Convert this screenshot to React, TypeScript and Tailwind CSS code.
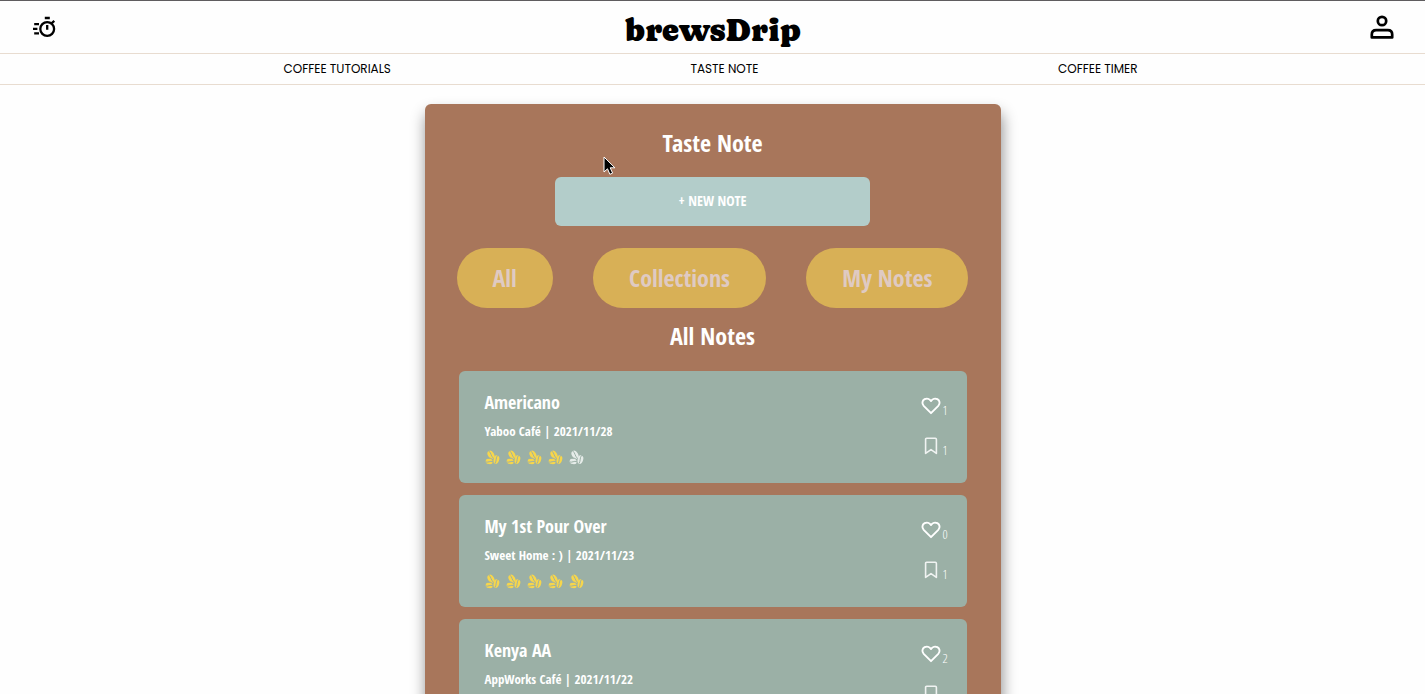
import type { ReactNode } from 'react';

type Note = { title: string; place: string; date: string; rating: number; likes: number; saves: number };

const notes: Note[] = [
  { title: 'Americano', place: 'Yaboo Café', date: '2021/11/28', rating: 4, likes: 1, saves: 1 },
  { title: 'My 1st Pour Over', place: 'Sweet Home : )', date: '2021/11/23', rating: 5, likes: 0, saves: 1 },
  { title: 'Kenya AA', place: 'AppWorks Café', date: '2021/11/22', rating: 4, likes: 2, saves: 1 },
];

const links = ['COFFEE TUTORIALS', 'TASTE NOTE', 'COFFEE TIMER'];
const filters = ['All', 'Collections', 'My Notes'];

function TimerIcon() {
  return (
    <svg width="24" height="24" viewBox="0 0 24 24" fill="none" stroke="#000" strokeWidth="2.3" aria-hidden="true">
      <circle cx="15.2" cy="14" r="6.9" />
      <path d="M12.8 3h5M19.500 8.400l2.800-2.500M15.200 10v4.700M2.200 9.200h4.800M1 13.800h4.400M2.200 18.400h4.800" />
    </svg>
  );
}

function UserIcon() {
  return (
    <svg width="24" height="24" viewBox="0 0 24 24" fill="none" stroke="#000" strokeWidth="2.7" aria-hidden="true">
      <circle cx="12" cy="6" r="4.2" />
      <path d="M1.8 22.4v-3c0-2.700 1.600-4.300 4.400-4.300h11.600c2.800 0 4.400 1.600 4.400 4.300v3z" strokeLinejoin="round" />
    </svg>
  );
}

function HeartIcon() {
  return (
    <svg width="20" height="18" viewBox="0 0 20 18" fill="none" stroke="#fff" strokeWidth="1.9" strokeLinejoin="round" aria-hidden="true">
      <path d="M10 16.2 2.7 8.9C.6 6.7 1.2 3.5 3.6 2.2 5.8 1 8.6 1.7 10 4.1 11.4 1.7 14.2 1 16.4 2.2c2.4 1.3 3 4.5.9 6.7z" />
    </svg>
  );
}

function BookmarkIcon() {
  return (
    <svg width="20" height="18" viewBox="0 0 20 18" fill="none" stroke="#fff" strokeOpacity="0.85" strokeWidth="1.6" strokeLinejoin="round" aria-hidden="true">
      <path d="M4.6 2.4c0-.7.4-1.1 1.1-1.1h8.6c.7 0 1.1.4 1.1 1.1v14L10 12.6l-5.4 3.8z" />
    </svg>
  );
}

function BeansIcon({ filled }: { filled: boolean }) {
  return (
    <svg width="16" height="16" viewBox="0 0 16 16" fill="none" aria-hidden="true">
      <g className={filled ? 'fill-[#f7d64b]' : 'fill-[#e6ece9]'}>
        <ellipse cx="6" cy="4.800" rx="3.100" ry="4.500" transform="rotate(-30 6 4.800)" />
        <ellipse cx="11.200" cy="9.600" rx="2.900" ry="4.400" transform="rotate(18 11.200 9.600)" />
        <ellipse cx="4.300" cy="11.300" rx="3.700" ry="2.800" transform="rotate(10 4.300 11.300)" />
      </g>
      <path
        d="M4 1.200c2.200 1.800 1.800 4.600 4.200 6.800M12.600 5.400c-2 2.400-.8 5-2.600 8.200M.6 12c2.600.8 4.400-1.400 7.200-.4M8.400 8.200c-.8 2-.6 3.800.4 5.600M2.400 8.400c2.200-.8 4 0 5.600 1.400"
        stroke="#9bb0a6"
        strokeWidth="1"
      />
    </svg>
  );
}

function Counter({ label, count, children }: { label: string; count: number; children: ReactNode }) {
  return (
    <button type="button" aria-label={label} className="flex h-6 items-end gap-[2px]">
      <span className="pb-1">{children}</span>
      <span className="w-2 pb-px text-left font-['Open_Sans_Condensed_Light','Open_Sans_Condensed',sans-serif] text-[13px] leading-4 font-normal">
        {count}
      </span>
    </button>
  );
}

function NoteCard({ note }: { note: Note }) {
  return (
    <li className="flex h-28 justify-between rounded-md bg-[#9bb0a6] pr-4 pl-[26px]">
      <div className="pt-[19px]">
        <h3 className="text-[18px] leading-6">{note.title}</h3>
        <p className="mt-2 text-[13px] leading-[18px]">
          {note.place} | {note.date}
        </p>
        <div className="mt-[10px] flex gap-[5px]" role="img" aria-label={`${note.rating} out of 5`}>
          {[1, 2, 3, 4, 5].map((n) => (
            <BeansIcon key={n} filled={n <= note.rating} />
          ))}
        </div>
      </div>
      <div className="flex flex-col gap-4 pt-6">
        <Counter label="Like" count={note.likes}>
          <HeartIcon />
        </Counter>
        <Counter label="Save" count={note.saves}>
          <BookmarkIcon />
        </Counter>
      </div>
    </li>
  );
}

export default function App() {
  return (
    <div className="min-h-screen bg-[#fefefe] pb-5 text-black">
      <header className="border-t border-[#5f5d5f]">
        <div className="flex h-[53px] items-center justify-between border-b border-[#e8dcd0] pr-[31px] pl-8">
          <button type="button" aria-label="Timer">
            <TimerIcon />
          </button>
          <a href="#home" className="pt-1.5 font-['Caprasimo','Noto_Serif',serif] text-[32px] leading-10">
            brewsDrip
          </a>
          <button type="button" aria-label="Profile">
            <UserIcon />
          </button>
        </div>
        <nav className="flex h-[31px] items-center justify-evenly gap-4 border-b border-[#e8dcd0] pr-1 font-['Poppins','Inter',sans-serif] text-[12px]">
          {links.map((link) => (
            <a key={link} href="#nav">
              {link}
            </a>
          ))}
        </nav>
      </header>

      <main className="relative mx-auto mt-[19px] max-w-xl rounded-md bg-[#a8765b] px-8 pt-[23px] pb-8 font-['Open_Sans_Condensed','Open_Sans',sans-serif] font-bold text-white shadow-[1px_9px_15px_rgba(0,0,0,0.45)]">
        <h1 className="text-center text-[24px] leading-8">Taste Note</h1>
        <div className="mt-[18px] text-center">
          <button type="button" className="h-[49px] w-[315px] rounded-md bg-[#b3cdca] pb-0.5 text-[14px]">
            + NEW NOTE
          </button>
        </div>
        <div className="mt-[22px] flex justify-between">
          {filters.map((filter) => (
            <button key={filter} type="button" className="h-[60px] rounded-full bg-[#d8b056] px-9 text-[24px] text-[#dfcac3]">
              {filter}
            </button>
          ))}
        </div>
        <h2 className="mt-3 text-center text-[24px] leading-8">All Notes</h2>
        <ul className="mx-[2px] mt-[19px] flex flex-col gap-3">
          {notes.map((note) => (
            <NoteCard key={note.title} note={note} />
          ))}
        </ul>
        <svg className="absolute top-[52px] left-[178px]" width="13" height="20" viewBox="0 0 13 20" aria-hidden="true">
          <path d="M1 1v15l3.500-3.200 2.400 5.500 2.700-1.200-2.400-5.300h4.700z" fill="#000" stroke="#fff" strokeWidth="1" />
        </svg>
      </main>
    </div>
  );
}
